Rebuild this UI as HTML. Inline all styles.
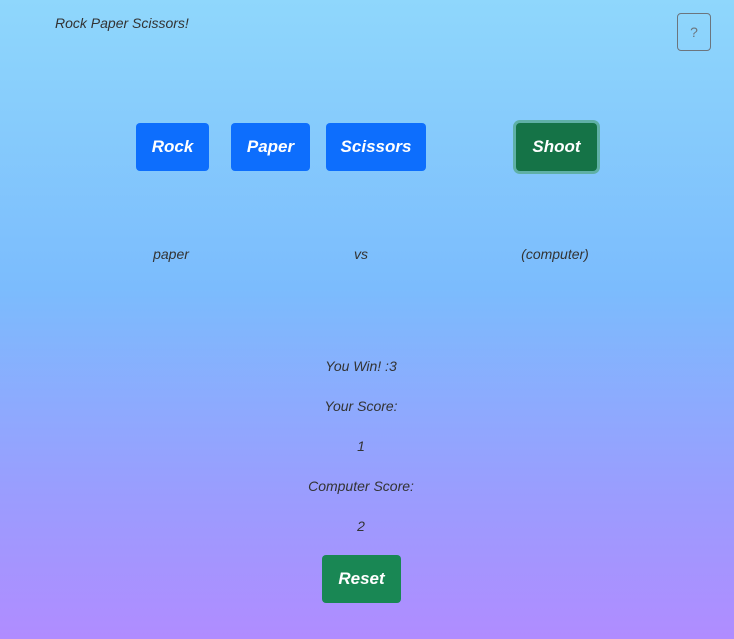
<!DOCTYPE html>
<html><head><style>
html,body{margin:0;padding:0}
body{width:734px;height:639px;position:relative;overflow:hidden;background:linear-gradient(#8fd7fc 0%,#7bbcfd 45%,#9b9cfe 78%,#b08cff 100%);font-family:"Liberation Sans",sans-serif;font-style:italic;color:#333;}
.t{position:absolute;font-size:14px;white-space:nowrap;transform:translateX(-50%)}
.b{position:absolute;background:#0d6efd;color:#fff;font-weight:bold;font-size:17px;display:flex;align-items:center;justify-content:center;border-radius:4px;height:48px}
</style></head><body>
<div style="position:absolute;left:55px;top:15px;font-size:14px">Rock Paper Scissors!</div>
<div style="position:absolute;left:677px;top:13px;width:32px;height:36px;border:1px solid #6c757d;border-radius:4px;color:#6c757d;font-style:normal;font-size:14px;display:flex;align-items:center;justify-content:center">?</div>
<div class="b" style="left:136px;top:123px;width:73px">Rock</div>
<div class="b" style="left:231px;top:123px;width:79px">Paper</div>
<div class="b" style="left:326px;top:123px;width:100px">Scissors</div>
<div class="b" style="left:516px;top:123px;width:81px;height:48px;background:#157347;box-shadow:0 0 0 3px #5fb0a6">Shoot</div>
<div class="t" style="left:171px;top:246px">paper</div>
<div class="t" style="left:361px;top:246px">vs</div>
<div class="t" style="left:555px;top:246px">(computer)</div>
<div class="t" style="left:361px;top:358px">You Win! :3</div>
<div class="t" style="left:361px;top:398px">Your Score:</div>
<div class="t" style="left:361px;top:438px">1</div>
<div class="t" style="left:361px;top:478px">Computer Score:</div>
<div class="t" style="left:361px;top:518px">2</div>
<div class="b" style="left:322px;top:555px;width:79px;background:#198754">Reset</div>
</body></html>
